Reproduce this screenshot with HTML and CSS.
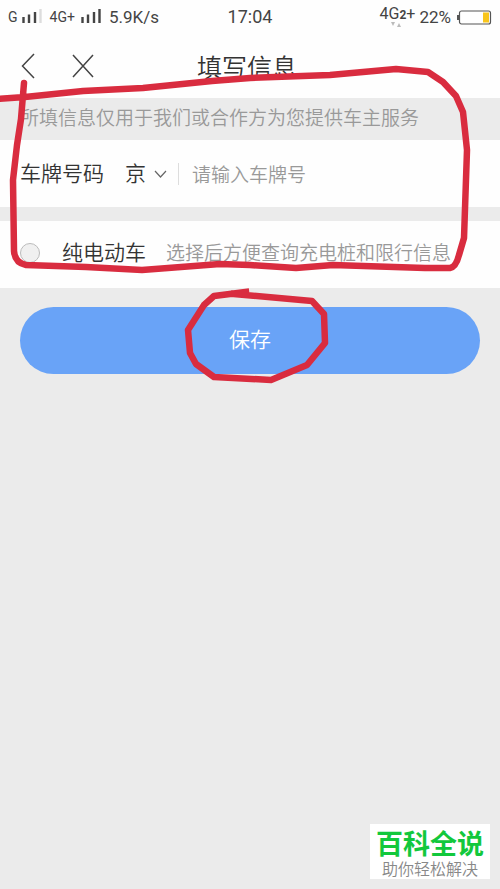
FILE: index.html
```html
<!DOCTYPE html>
<html lang="zh-CN">
<head>
<meta charset="utf-8">
<meta name="viewport" content="width=device-width, initial-scale=1">
<title>填写信息</title>
<link rel="stylesheet" href="styles.css">
</head>
<body>
<div class="status">
  <div class="status-side">
    <span class="net">G</span>
    <svg class="signal" width="20" height="14" viewBox="0 0 20 14" aria-hidden="true">
      <path d="M1.500 8v6M7 5.500v8.500M13 3v11" stroke="#444" stroke-width="2.400"/>
      <path d="M18.500 0v14" stroke="#ddd" stroke-width="2.400"/>
    </svg>
    <span class="net net-main">4G+</span>
    <svg class="signal signal-main" width="20" height="14" viewBox="0 0 20 14" aria-hidden="true">
      <path d="M1.500 8v6M7 5.500v8.500M13 3v11M18.500 0v14" stroke="#444" stroke-width="2.400"/>
    </svg>
    <span class="rate">5.9K/s</span>
  </div>
  <time class="clock">17:04</time>
  <div class="status-side status-end">
    <span class="data">4G<small>2</small>+
      <svg class="traffic" width="12" height="5" viewBox="0 0 12 5" aria-hidden="true"><path d="M0 0h4L2 4zM6 5h4L8 1z" fill="#bbb"/></svg>
    </span>
    <span class="percent">22%</span>
    <svg class="battery" width="35" height="15" viewBox="0 0 35 15" aria-hidden="true">
      <rect x="2.500" y="1" width="31" height="13" rx="2" fill="#fff" stroke="#555" stroke-width="1.200"/>
      <path d="M1 5v5" stroke="#555" stroke-width="2"/>
      <path d="M26 2.500h6v10h-6z" fill="#f8c51c"/>
    </svg>
  </div>
</div>

<header class="header">
  <nav class="nav">
    <button class="icon-button" type="button" aria-label="返回">
      <svg width="14" height="26" viewBox="0 0 14 26"><path d="M13 1L1.500 13 13 25" fill="none" stroke="#444" stroke-width="1.500"/></svg>
    </button>
    <button class="icon-button" type="button" aria-label="关闭">
      <svg width="22" height="24" viewBox="0 0 22 24"><path d="M1 1l20 22M21 1L1 23" fill="none" stroke="#444" stroke-width="1.500"/></svg>
    </button>
  </nav>
  <h1 class="title">填写信息</h1>
</header>

<form class="form">
  <p class="notice">所填信息仅用于我们或合作方为您提供车主服务</p>
  <div class="row">
    <label class="label" for="plate">车牌号码</label>
    <span class="province">
      <select class="province-select" aria-label="省份"><option>京</option><option>沪</option><option>粤</option></select>
      <svg class="chevron" width="13" height="8" viewBox="0 0 13 8" aria-hidden="true"><path d="M1 1l5.500 6L12 1" fill="none" stroke="#666" stroke-width="1.200"/></svg>
    </span>
    <input class="plate" id="plate" type="text" placeholder="请输入车牌号">
  </div>
  <div class="row row-electric">
    <input class="check" id="electric" type="checkbox">
    <label class="label" for="electric">纯电动车</label>
    <span class="hint">选择后方便查询充电桩和限行信息</span>
  </div>
  <button class="save" type="button">保存</button>
</form>

<svg class="marks" viewBox="0 0 500 400" aria-hidden="true">
  <g fill="none" stroke="#d92c3f" stroke-width="6.500" stroke-linejoin="round">
    <path d="M-3 99L25 97 83 91 143 88 212 81 250 78 330 75 396 69 428 72 443 82 456 96 463 112 467 150 464 238 459 255 Q456 267 450 268L425 268 333 265 296 268 250 265 220 264 142 270 86 267 26 265 Q15 263 14 251L13 180 17 145 21 119 24 83" stroke-linecap="round"/>
    <path d="M246 292L214 296 204 305 188 330 190 353 196 364 214 377 271 380 307 365 325 343 324 314 312 301 234 294" stroke-linecap="square"/>
  </g>
</svg>

<aside class="brand">
  <strong class="brand-name">百科全说</strong>
  <span class="brand-line">助你轻松解决</span>
</aside>
</body>
</html>
```
FILE: styles.css
```css
* {
  box-sizing: border-box;
}

body {
  margin: 0;
  min-height: 100vh;
  position: relative;
  background: #ebebeb;
  color: #333;
  font-family: "Noto Sans CJK SC", sans-serif;
  font-weight: 350;
}

button,
input,
select {
  margin: 0;
  padding: 0;
  border: 0;
  background: none;
  color: inherit;
  font: inherit;
}

.status {
  display: grid;
  grid-template-columns: 1fr auto 1fr;
  align-items: center;
  height: 34px;
  padding: 0 8px;
  background: #fefefe;
  color: #444;
  font-family: Roboto, sans-serif;
  font-weight: 400;
  line-height: 20px;
}

.status-side {
  display: flex;
  align-items: center;
  white-space: nowrap;
}

.status-end {
  justify-content: flex-end;
}

.net {
  font-size: 14px;
}

.net-main {
  margin-left: 8px;
}

.signal {
  margin: 0 0 2px 4px;
}

.signal-main {
  margin-left: 6px;
}

.rate {
  margin-left: 8px;
  font-size: 17px;
}

.clock {
  font-size: 18px;
}

.data {
  position: relative;
  margin-bottom: 6px;
  font-size: 16px;
}

.data small {
  font-size: 12px;
  font-weight: 700;
}

.traffic {
  position: absolute;
  left: 11px;
  top: 18px;
}

.percent {
  margin: 0 6px 0 4px;
  font-size: 17px;
}

.header {
  display: grid;
  grid-template-columns: 1fr auto 1fr;
  align-items: center;
  height: 64px;
  padding: 0 21px;
  background: #fefefe;
}

.nav {
  display: flex;
  gap: 37px;
}

.icon-button {
  display: flex;
  align-items: center;
}

.title {
  margin: 0 6px 0 0;
  font-size: 25px;
  font-weight: 350;
  line-height: 36px;
}

.notice {
  margin: 0;
  padding: 5px 20px 9px;
  color: #999;
  font-size: 19px;
  line-height: 28px;
  white-space: nowrap;
}

.row {
  display: flex;
  align-items: center;
  height: 67px;
  padding: 0 20px;
  background: #fefefe;
}

.label,
.province {
  flex: none;
  padding-bottom: 4px;
  font-size: 21px;
  line-height: 32px;
}

.province {
  display: flex;
  align-items: center;
  margin-left: 21px;
  position: relative;
}

.province-select {
  width: 42px;
  appearance: none;
}

.chevron {
  position: absolute;
  right: 0;
  bottom: 14px;
  pointer-events: none;
}

.plate {
  flex: 1;
  min-width: 0;
  height: 22px;
  margin-left: 11px;
  padding-left: 13px;
  border-left: 1px solid #ddd;
  font-size: 19px;
}

.plate::placeholder {
  color: #999;
}

.row-electric {
  margin-top: 14px;
  padding-bottom: 4px;
}

.check {
  flex: none;
  width: 20px;
  height: 20px;
  margin-right: 22px;
  appearance: none;
  border: 1px solid #bbb;
  border-radius: 50%;
  background: #f0f0f0;
}

.check:checked {
  background: #69a3f7;
}

.hint {
  margin-left: 20px;
  padding-bottom: 2px;
  color: #999;
  font-size: 19px;
  line-height: 28px;
  white-space: nowrap;
}

.save {
  display: block;
  width: calc(100% - 40px);
  height: 67px;
  margin: 19px 20px 0;
  padding-bottom: 6px;
  border-radius: 34px;
  background: #69a3f7;
  color: #fff;
  font-size: 21px;
}

.marks {
  position: absolute;
  top: 0;
  left: 0;
  width: 100%;
  pointer-events: none;
}

.brand {
  position: absolute;
  right: 10px;
  bottom: 10px;
  padding: 4px 6px 1px;
  background: #fff;
  text-align: center;
}

.brand-name,
.brand-line {
  display: block;
}

.brand-name {
  color: #12c83c;
  font-size: 27px;
  font-weight: 700;
  line-height: 30px;
}

.brand-line {
  color: #888;
  font-size: 16px;
  line-height: 20px;
}
```
